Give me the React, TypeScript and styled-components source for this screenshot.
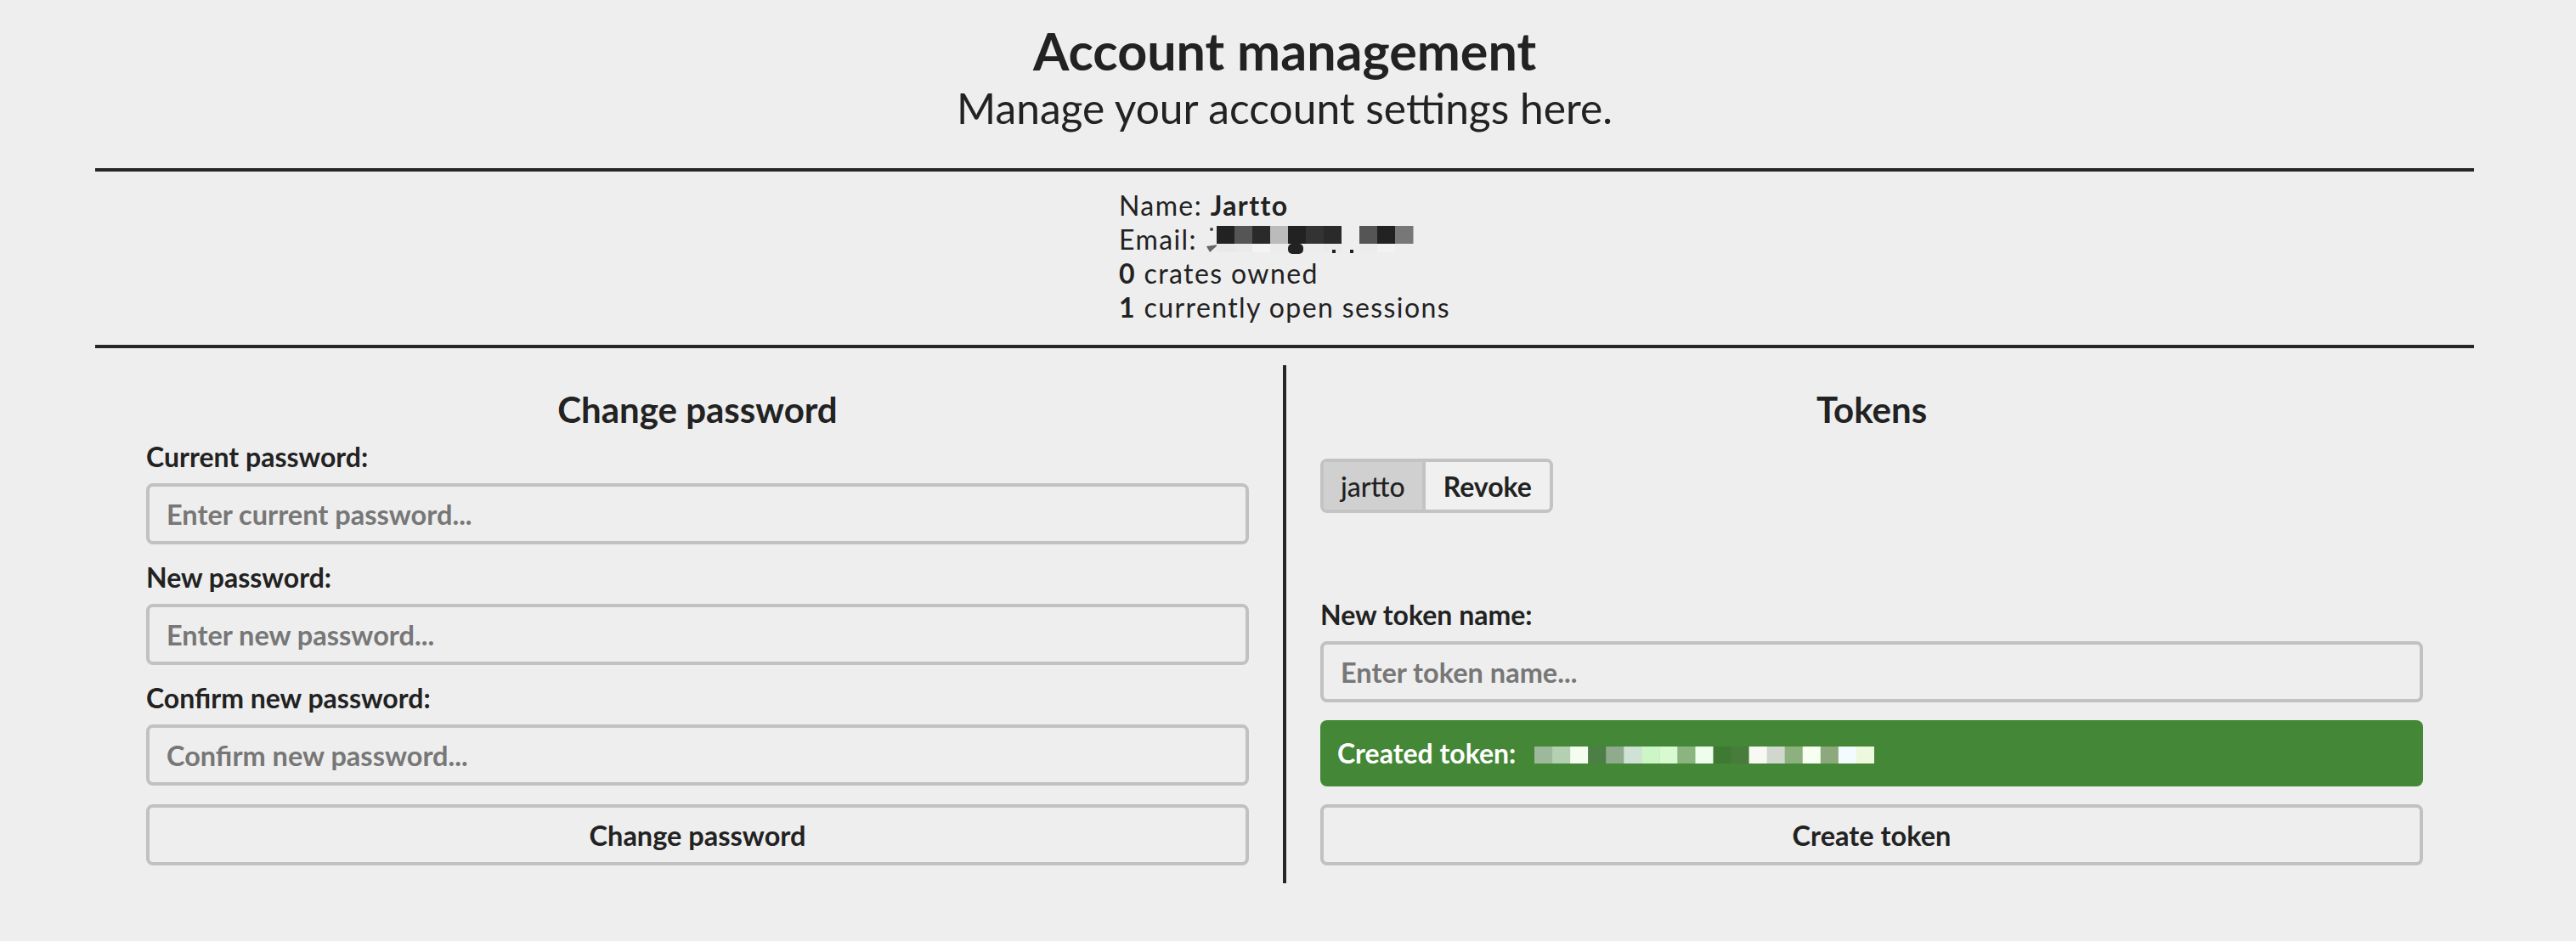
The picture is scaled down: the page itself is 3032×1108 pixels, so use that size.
import React from "react";
import styled, { createGlobalStyle } from "styled-components";

const GlobalStyle = createGlobalStyle`
  html, body {
    margin: 0;
    padding: 0;
    background: #eeeeee;
  }
  body {
    font-family: Lato, "Open Sans", "Noto Sans", sans-serif;
    color: #222222;
  }
  * { box-sizing: border-box; }
`;

const Page = styled.main`
  width: 2800px;
  margin: 0 0 0 112px;
`;

const Header = styled.header`
  text-align: center;
  padding: 22px 0 42px;
`;

const Title = styled.h1`
  margin: 0;
  font-size: 61px;
  line-height: 76.8px;
  font-weight: 700;
`;

const Subtitle = styled.p`
  margin: 0;
  font-size: 49.7px;
  line-height: 57.6px;
  font-weight: 400;
`;

const Rule = styled.hr`
  margin: 0;
  border: none;
  height: 4px;
  background: #262626;
`;

const Info = styled.section`
  display: flex;
  justify-content: center;
  padding: 20px 0 24px;
`;

const InfoList = styled.div`
  font-size: 32px;
  line-height: 40px;
  letter-spacing: 1.4px;
`;

const InfoLine = styled.div`
  white-space: nowrap;
`;

const Strong = styled.strong`
  font-weight: 700;
`;

const Columns = styled.section`
  display: grid;
  grid-template-columns: 1fr 4px 1fr;
  column-gap: 40px;
  padding: 0 60px;
  margin-top: 20px;
  height: 610px;
`;

const Column = styled.div`
  display: flex;
  flex-direction: column;
  padding: 28px 0 21px;
`;

const Divider = styled.div`
  background: #262626;
`;

const ColumnTitle = styled.h2`
  margin: 0;
  text-align: center;
  font-size: 42px;
  line-height: 48px;
  font-weight: 700;
`;

const Form = styled.div`
  display: flex;
  flex-direction: column;
  gap: 19px;
  margin-top: 12px;
`;

const Field = styled.label`
  display: flex;
  flex-direction: column;
  gap: 11px;
`;

const Label = styled.span`
  font-size: 32px;
  line-height: 40px;
  font-weight: 700;
`;

const Input = styled.input`
  height: 72px;
  width: 100%;
  padding: 0 20px;
  border: 4px solid #c1c1c1;
  border-radius: 8px;
  background: transparent;
  font-family: inherit;
  font-size: 32.5px;
  font-weight: 700;
  color: #222;
  outline: none;
  &::placeholder {
    color: #777777;
  }
`;

const Button = styled.button<{ $gap?: number }>`
  height: 72px;
  width: 100%;
  margin-top: ${(p) => p.$gap ?? 0}px;
  border: 4px solid #c1c1c1;
  border-radius: 8px;
  background: transparent;
  font-family: inherit;
  font-size: 32.5px;
  font-weight: 700;
  color: #222;
  cursor: pointer;
`;

const TokenList = styled.div`
  display: flex;
  margin-top: 34px;
`;

const TokenChip = styled.div`
  display: inline-flex;
  height: 64px;
  border: 4px solid #c3c3c3;
  border-radius: 8px;
  overflow: hidden;
`;

const TokenName = styled.span`
  display: flex;
  align-items: center;
  padding: 0 20px;
  background: #d0d0d0;
  border-right: 4px solid #c3c3c3;
  font-size: 32px;
  font-weight: 500;
`;

const RevokeButton = styled.button`
  display: flex;
  align-items: center;
  padding: 0 21px;
  border: none;
  background: #f0f0f0;
  font-family: inherit;
  font-size: 32px;
  font-weight: 700;
  color: #222;
  cursor: pointer;
`;

const BottomGroup = styled.div`
  margin-top: auto;
  display: flex;
  flex-direction: column;
`;

const Alert = styled.div`
  margin-top: 21px;
  height: 78px;
  padding: 19px 20px;
  border-radius: 8px;
  background: #448736;
  color: #ffffff;
  font-size: 32px;
  line-height: 40px;
  font-weight: 700;
  white-space: nowrap;
`;

const Mosaic = styled.svg<{ $drop: number }>`
  vertical-align: ${(p) => -p.$drop}px;
  margin-left: ${(p) => (p.$drop ? 0 : 22)}px;
`;

const emailTop = ["#222", "#555", "#2a2a2a", "#bbb", "#222", "#333", "#2a2a2a", "#eee", "#555", "#222", "#777"];
const emailBottom = ["#e9e9e9", "#ebebeb", "#f4f4f4", "#ececec", "#222", "#ededed", "#ebebeb", "#eee", "#ececec", "#f2f2f2", "#eee"];

const EmailMosaic = () => (
  <Mosaic $drop={6} width={248} height={34} viewBox="0 0 248 34">
    <path d="M2 24 L16 22 L6 31 Z" fill="#666" />
    <circle cx="8" cy="4" r="2" fill="#444" />
    {emailTop.map((c, i) => (
      <rect key={`t${i}`} x={14 + i * 21} y={0} width={21.5} height={21} fill={c} />
    ))}
    {emailBottom.map((c, i) =>
      c === "#222" ? (
        <rect key={`b${i}`} x={14 + i * 21} y={21} width={18} height={12} rx={5} fill={c} />
      ) : (
        <rect key={`b${i}`} x={14 + i * 21} y={21} width={21.5} height={10} fill={c} />
      )
    )}
    <rect x={150} y={28} width={4} height={4} fill="#222" />
    <rect x={171} y={28} width={4} height={4} fill="#222" />
  </Mosaic>
);

const tokenColors = [
  "#9db89b", "#b3d0b0", "#f4fdef", "#4c7f45", "#8faa8c", "#d0e2d5", "#cdf6c7",
  "#d9f9d0", "#8ab57f", "#effdec", "#3f7a33", "#477c3d", "#f8f9f2", "#d0d8ce",
  "#8cb07e", "#f6fff0", "#8ca87d", "#f3fbff", "#edf8dc",
];

const TokenMosaic = () => (
  <Mosaic $drop={0} width={400} height={20} viewBox="0 0 400 20">
    {tokenColors.map((c, i) => (
      <rect key={i} x={i * 21.05} y={0} width={21.5} height={20} fill={c} />
    ))}
  </Mosaic>
);

export default function App() {
  return (
    <>
      <GlobalStyle />
      <Page>
        <Header>
          <Title>Account management</Title>
          <Subtitle>Manage your account settings here.</Subtitle>
        </Header>
        <Rule />
        <Info>
          <InfoList>
            <InfoLine>
              Name: <Strong>Jartto</Strong>
            </InfoLine>
            <InfoLine>
              Email: <EmailMosaic />
            </InfoLine>
            <InfoLine>
              <Strong>0</Strong> crates owned
            </InfoLine>
            <InfoLine>
              <Strong>1</Strong> currently open sessions
            </InfoLine>
          </InfoList>
        </Info>
        <Rule />
        <Columns>
          <Column>
            <ColumnTitle>Change password</ColumnTitle>
            <Form>
              <Field>
                <Label>Current password:</Label>
                <Input type="password" placeholder="Enter current password..." />
              </Field>
              <Field>
                <Label>New password:</Label>
                <Input type="password" placeholder="Enter new password..." />
              </Field>
              <Field>
                <Label>Confirm new password:</Label>
                <Input type="password" placeholder="Confirm new password..." />
              </Field>
            </Form>
            <Button $gap={22}>Change password</Button>
          </Column>
          <Divider />
          <Column>
            <ColumnTitle>Tokens</ColumnTitle>
            <TokenList>
              <TokenChip>
                <TokenName>jartto</TokenName>
                <RevokeButton>Revoke</RevokeButton>
              </TokenChip>
            </TokenList>
            <BottomGroup>
              <Field>
                <Label>New token name:</Label>
                <Input type="text" placeholder="Enter token name..." />
              </Field>
              <Alert>
                Created token:
                <TokenMosaic />
              </Alert>
              <Button $gap={21}>Create token</Button>
            </BottomGroup>
          </Column>
        </Columns>
      </Page>
    </>
  );
}
